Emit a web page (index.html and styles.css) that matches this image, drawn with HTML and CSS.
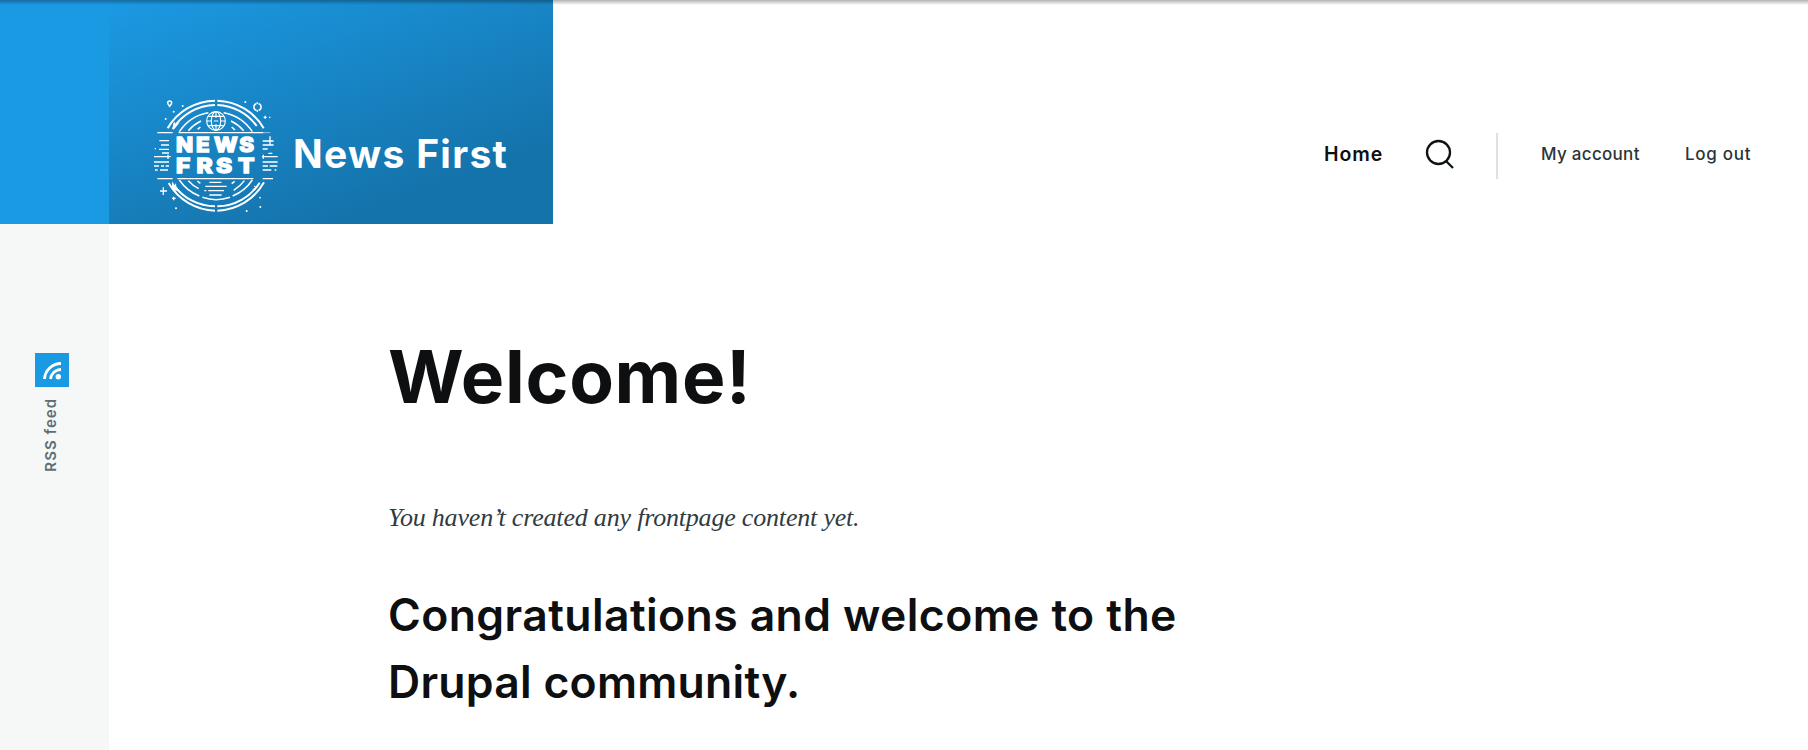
FILE: index.html
```html
<!DOCTYPE html>
<html lang="en">
<head>
<meta charset="utf-8">
<title>Welcome! | News First</title>
<link rel="stylesheet" href="styles.css">
</head>
<body>
<div class="page">
  <aside class="rail">
    <div class="rail-top"></div>
    <a class="rss">
      <svg class="rss-icon" viewBox="0 0 34 34"><path d="M9.500 26A16.500 16.500 0 0 1 26 10.500M15.500 26a10.500 10.500 0 0 1 10.500-9.500" fill="none" stroke="#fff" stroke-width="2.800"/><circle cx="23.300" cy="23.700" r="2.700" fill="#fff"/></svg>
      <span class="rss-label">RSS feed</span>
    </a>
  </aside>
  <div class="content">
    <header class="header">
      <div class="brand">
        <svg class="logo" viewBox="0 0 450 420" fill="none" stroke="#fff">
          <g stroke-width="6">
            <path d="M83 130A166 166 0 0 1 225 47M232 47A166 166 0 0 1 371 130M86 294A166 166 0 0 0 225 377M232 377A166 166 0 0 0 372 292"/>
            <path d="M98 132A153 153 0 0 1 225 60M232 60A153 153 0 0 1 350 123M102 301A153 153 0 0 0 225 364M232 364A153 153 0 0 0 359 293"/>
          </g>
          <g stroke-width="4.500">
            <path d="M118 140A131 131 0 0 1 205 83M251 83A131 131 0 0 1 337 140M118 285A131 131 0 0 0 178 333M187 337A131 131 0 0 0 270 337M278 333A131 131 0 0 0 337 285"/>
            <path d="M145 137A113 113 0 0 1 183 108M273 108A113 113 0 0 1 311 137M145 287A113 113 0 0 0 176 311M281 316A113 113 0 0 0 313 287"/>
            <path d="M173 133l8-7M275 126l10 9M172 288l9 7M275 296l9-7"/>
          </g>
          <path stroke-width="4" d="M52 143H98M116 143H370M52 281H98M112 281H340M368 281H399"/>
          <path stroke-width="3" opacity=".5" d="M370 143H391"/>
          <g stroke-width="3.500">
            <circle cx="228" cy="108" r="28"/><ellipse cx="228" cy="108" rx="14" ry="28"/>
            <path d="M228 80v18M228 118v18M200 108h15M221 108h14M243 108h13M205 94h46M205 122h46"/>
          </g>
          <g stroke-width="4">
            <path d="M58 167H87M63 180H87M57 193H87M66 204H87M42 215H92M84 209v13M42 231H87M42 243H57M63 243H72M77 243H87M45 255H53M60 255H84M44 191h4"/>
            <path d="M368 168H401M390 154v27M368 180H401M368 192H383M385 205H397M366 215H413M370 209v12M368 231H413M368 243H384M389 243H412M368 255H394M404 255h5"/>
            <path d="M208 292H244M196 304H260M205 317H252M208 330H245M193 317h6"/>
            <path d="M60 318H81M70 307V330M96 340h11M101 335v11M371 97h9M375.500 92v9M387 97h4"/>
          </g>
          <path fill="#fff" stroke="none" d="M97 133l3-18 5-5 1 11 14-9-18 21zM96 314V289l8 12 4-7 1 13 10 12z"/>
          <path stroke-width="4.500" d="M89 64C84 58 83 56 83 54a6 6 0 0 1 12 0c0 2-1 4-6 10zM349 56a10.500 10.500 0 0 0 0 20M356 56a10.500 10.500 0 0 1 0 20M352 52v5M352 75v6"/>
          <path stroke-width="3" d="M342 303l6 4 6-8M338 313l10-2"/>
          <g fill="#fff" stroke="none"><circle cx="128" cy="63" r="3"/><circle cx="101" cy="80" r="3"/><circle cx="77" cy="102" r="3"/><circle cx="316" cy="51" r="3"/><circle cx="108" cy="370" r="3"/><circle cx="320" cy="378" r="3"/><circle cx="360" cy="338" r="2.500"/><circle cx="361" cy="366" r="3"/></g>
          <g class="logo-text"><text transform="scale(1.1 1)" x="98 153 202 270.500" y="202">NEWS</text><text transform="scale(1.2 1)" x="90 141 190 245" y="265">FRST</text></g>
        </svg>
        <a class="site-name">News First</a>
      </div>
      <nav class="nav">
        <a class="home">Home</a>
        <svg class="search" viewBox="0 0 30 32"><circle cx="13.500" cy="13.500" r="11.500"/><path d="M21 22l7 7"/></svg>
        <span class="divider"></span>
        <a class="account">My account</a>
        <a class="logout">Log out</a>
      </nav>
    </header>
    <main class="main">
      <h1>Welcome!</h1>
      <p><em>You haven’t created any frontpage content yet.</em></p>
      <h2><span class="line-one">Congratulations and welcome to the</span><br><span class="line-two">Drupal community.</span></h2>
    </main>
  </div>
</div>
<div class="top-shadow"></div>
</body>
</html>
```
FILE: styles.css
```css
* { box-sizing: border-box; }
body { margin: 0; background: #fff; color: #0d0f11; font-family: Inter, "Open Sans", sans-serif; }
.page { display: flex; height: 750px; overflow: hidden; }
.rail { width: 109px; flex: none; background: #f5f8f7; }
.rail-top { height: 224px; background: #1b9ae4; }
.rss { display: flex; flex-direction: column; align-items: center; width: 34px; margin: 129px 0 0 35px; }
.rss-icon { width: 34px; height: 34px; background: #1b9ae4; }
.rss-label { writing-mode: vertical-rl; transform: rotate(180deg); margin: 11px 2px 0 0; font-size: 15px; line-height: 20px; font-weight: 600; letter-spacing: 1px; color: #5f6d74; white-space: nowrap; }
.content { flex: 1; min-width: 0; }
.header { height: 224px; display: flex; justify-content: space-between; }
.brand { width: 444px; display: flex; padding: 85px 0 0 31px; background: linear-gradient(160deg, #1b9ae4 0%, #1573ab 79%); }
.logo { width: 150px; height: 140px; flex: none; }
.logo-text { fill: #fff; stroke: #fff; stroke-width: 4px; font-family: Inter, sans-serif; font-weight: 800; font-size: 61px; }
.site-name { margin: 40px 0 0 3px; color: #fff; font-size: 39px; line-height: 58px; font-weight: 700; letter-spacing: 1.3px; white-space: nowrap; }
.nav { display: flex; align-items: center; height: 46px; margin: 133px 57px 0 0; white-space: nowrap; }
.home { width: 60px; margin-right: 41px; font-size: 19.5px; line-height: 28px; font-weight: 600; margin-top: -4px; letter-spacing: .9px; }
.search { width: 30px; height: 32px; margin: -3px 41px 0 0; fill: none; stroke: #0d1214; stroke-width: 2.3px; }
.divider { width: 2px; height: 46px; background: #dbe1e5; margin-right: 43px; }
.account, .logout { color: #2b3438; font-size: 17px; line-height: 26px; font-weight: 500; margin-top: -4px; }
.account { width: 99px; margin-right: 45px; letter-spacing: .3px; }
.logout { width: 66px; letter-spacing: .7px; }
.main { padding: 109px 0 0 280px; }
h1 { margin: 0 0 0 -1px; font-size: 73px; line-height: 88px; font-weight: 700; letter-spacing: .7px; white-space: nowrap; }
p { margin: 79px 0 0 -1px; font-family: "Liberation Serif", serif; font-size: 26px; line-height: 36px; letter-spacing: -.19px; color: #313b3f; white-space: nowrap; }
h2 { margin: 46px 0 0 -1px; font-size: 44.5px; line-height: 67px; font-weight: 600; white-space: nowrap; }
.line-one { letter-spacing: .4px; }
.line-two { letter-spacing: .25px; }
.top-shadow { position: absolute; inset: 0 0 auto; height: 5px; background: linear-gradient(rgba(0, 0, 0, .3), rgba(0, 0, 0, 0)); }
```
